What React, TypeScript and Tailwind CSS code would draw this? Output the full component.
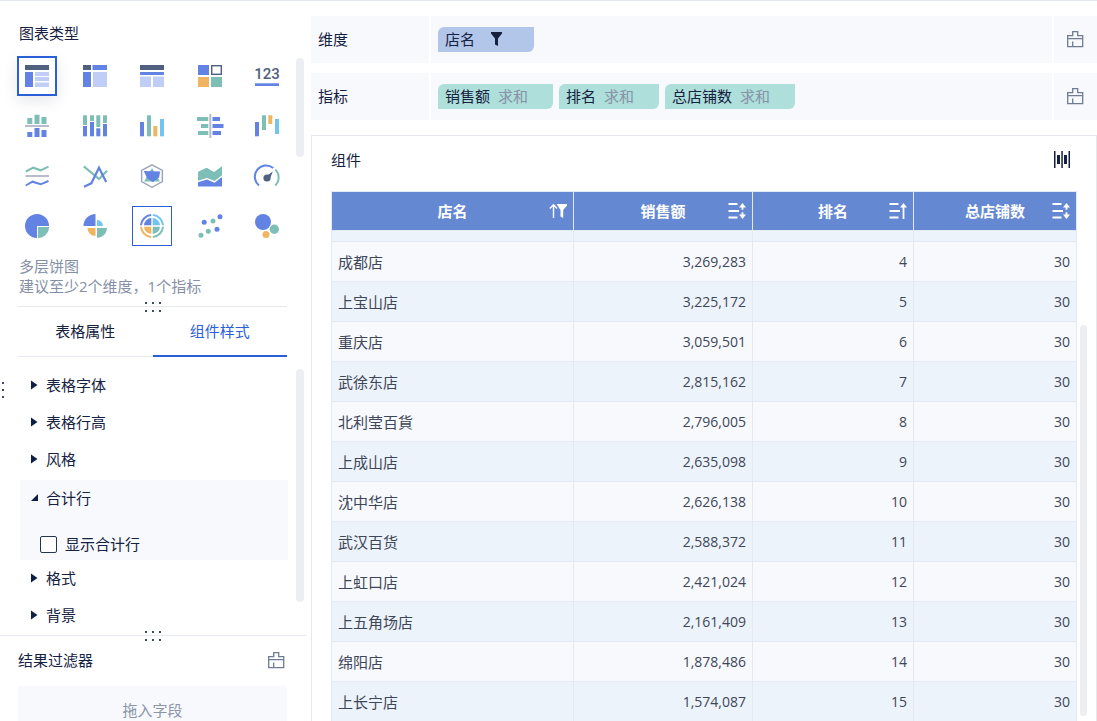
import type { ReactNode } from 'react';
import clsx from 'clsx';

const BLUE = '#6283e3';
const LIGHT = '#c0cdf6';
const DARK = '#4f6080';
const GREEN = '#7dbfb6';
const ORANGE = '#efb560';
const SKY = '#74c4f0';
const GREY = '#b8bccb';

type Bar = [x: number, y: number, w: number, h: number, fill: string];

function Bars({ items }: { items: Bar[] }) {
  return (
    <>
      {items.map(([x, y, width, height, fill], i) => (
        <rect key={i} x={x} y={y} width={width} height={height} fill={fill} />
      ))}
    </>
  );
}

const chartTypes: { name: string; selected?: boolean; hovered?: boolean; icon: ReactNode }[] = [
  {
    name: '分组表',
    selected: true,
    icon: <Bars items={[[0, 1, 24, 5, DARK], [0, 8, 8, 15, BLUE], [10, 8, 14, 4, LIGHT], [10, 13, 14, 4, LIGHT], [10, 18.5, 14, 4.5, LIGHT]]} />,
  },
  {
    name: '交叉表',
    icon: <Bars items={[[0, 1, 8, 5, DARK], [9.5, 1, 14.5, 5, BLUE], [0, 8, 8, 15, BLUE], [10, 8, 14, 15, LIGHT]]} />,
  },
  {
    name: '明细表',
    icon: <Bars items={[[0, 1, 24, 5, DARK], [0, 8, 24, 3, BLUE], [0, 12.5, 11, 10.5, LIGHT], [13, 12.5, 11, 10.5, LIGHT]]} />,
  },
  {
    name: '颜色表格',
    icon: (
      <>
        <Bars items={[[0, 1, 11, 10, BLUE], [0, 13, 11, 10, ORANGE], [13, 13, 11, 10, GREEN]]} />
        <rect x="13.7" y="1.7" width="9.6" height="8.6" fill="none" stroke={DARK} strokeWidth="1.4" />
      </>
    ),
  },
  {
    name: '指标卡',
    icon: (
      <>
        <text x="12" y="15" textAnchor="middle" fontSize="15" fill={DARK} className="font-['Roboto',sans-serif] font-medium">123</text>
        <rect x="0" y="19.3" width="24" height="2.7" fill={BLUE} />
      </>
    ),
  },
  {
    name: '对比柱状图',
    icon: <Bars items={[[2.3, 4, 5, 6, GREEN], [9.5, 0.7, 5, 9.3, GREEN], [16.5, 3, 5, 7, GREEN], [0, 11, 24, 2, GREY], [2.3, 18, 5, 5, BLUE], [9.5, 14, 5, 9, BLUE], [16.5, 16, 5, 7, BLUE]]} />,
  },
  {
    name: '堆积柱状图',
    icon: <Bars items={[[0, 1.3, 4, 9.7, GREEN], [0, 12, 4, 10.3, BLUE], [7, 1.3, 4, 5.7, GREEN], [7, 8, 4, 14.3, BLUE], [13.3, 1.3, 4, 11.7, GREEN], [13.3, 14.3, 4, 8, BLUE], [20, 1.3, 4, 7.7, GREEN], [20, 10, 4, 12.3, BLUE]]} />,
  },
  {
    name: '多系列柱状图',
    icon: <Bars items={[[0, 8, 4, 14.3, BLUE], [7, 1.3, 4, 21, GREEN], [13.3, 12, 4, 10.3, ORANGE], [20, 5, 4, 17.3, SKY]]} />,
  },
  {
    name: '对比条形图',
    icon: <Bars items={[[-1, 3, 11.3, 4, GREEN], [3, 10, 7.3, 4, GREEN], [0, 17, 10.3, 4, GREEN], [11.3, 0, 2, 24, GREY], [14.5, 3, 7.5, 4, BLUE], [14.5, 10, 11, 4, BLUE], [14.5, 17, 8.5, 4, BLUE]]} />,
  },
  {
    name: '瀑布图',
    icon: <Bars items={[[0, 8, 4, 14.3, BLUE], [7, 1.3, 4, 14.7, GREEN], [13.3, 1.3, 4, 8.7, ORANGE], [20, 5, 4, 15, SKY]]} />,
  },
  {
    name: '范围面积图',
    icon: (
      <g fill="none" strokeWidth="2">
        <path d="M.8 7.5 8.3 3.7 15.7 6.3 23.5 2.7" stroke={GREEN} />
        <path d="M.5 12H24" stroke={GREY} />
        <path d="M.8 21.5 7.5 17.7 15.7 20.3 23.5 17" stroke={BLUE} />
      </g>
    ),
  },
  {
    name: '折线图',
    icon: (
      <g fill="none" strokeWidth="2.2">
        <path d="M.8 2.3 16 15 24 6.7" stroke={GREEN} />
        <path d="M1 22.7 8.3 19.3 16 3.7 23.2 18" stroke={BLUE} />
      </g>
    ),
  },
  {
    name: '雷达图',
    icon: (
      <>
        <path d="M12 .8 22.4 6.3V17.7L12 23.3 1.6 17.7V6.3Z" fill="none" stroke="#9aa3b8" strokeWidth="1.4" />
        <path d="M12 4 20 17.5H4Z" fill={GREEN} />
        <path d="M3.8 7 20.2 7.5 19 13.5 12.7 18.3 7 14Z" fill={BLUE} />
      </>
    ),
  },
  {
    name: '面积图',
    icon: (
      <>
        <path d="M0 7.7 8.7 3.7 16 8 24 2.3V11.3L16.5 17 9 14 0 16.7Z" fill={GREEN} />
        <path d="M0 18.2 9 15.5 16.5 18.7 24 13V22.5H0Z" fill={BLUE} />
      </>
    ),
  },
  {
    name: '仪表盘',
    icon: (
      <>
        <g fill="none" strokeWidth="2">
          <path d="M4 21.5A11 11 0 0 1 18.2 4" stroke={BLUE} />
          <path d="M20.2 5.5A11 11 0 0 1 20.2 21.5" stroke={GREEN} />
        </g>
        <circle cx="12" cy="14" r="3.6" fill={DARK} />
        <path d="M11.5 12 17.8 7.5 14.8 15Z" fill={DARK} />
      </>
    ),
  },
  {
    name: '饼图',
    icon: (
      <>
        <path d="M12 12V24A12 12 0 1 1 24 12Z" fill={BLUE} />
        <path d="M13 13H24A11 11 0 0 1 13 24Z" fill={GREEN} />
      </>
    ),
  },
  {
    name: '玫瑰图',
    icon: (
      <>
        <path d="M12.5 12V0A12 12 0 0 0 .5 12Z" fill={BLUE} />
        <path d="M14 12V6A6 6 0 0 1 20 12Z" fill={SKY} />
        <path d="M12.5 14V22A8 8 0 0 1 4.5 14Z" fill={ORANGE} />
        <path d="M14 14H24A10 10 0 0 1 14 24Z" fill={GREEN} />
      </>
    ),
  },
  {
    name: '多层饼图',
    hovered: true,
    icon: (
      <>
        <g fill="none" strokeWidth="2">
          <path d="M1 11.2A11 11 0 0 1 11.2 1" stroke={BLUE} />
          <path d="M12.8 1A11 11 0 0 1 23 11.2" stroke={SKY} />
          <path d="M1 12.8A11 11 0 0 0 11.2 23" stroke={ORANGE} />
          <path d="M12.8 23A11 11 0 0 0 23 12.8" stroke={GREEN} />
        </g>
        <path d="M11.3 11.3V4A7.6 7.6 0 0 0 4 11.3Z" fill={BLUE} />
        <path d="M12.7 11.3V4A7.6 7.6 0 0 1 20 11.3Z" fill={SKY} />
        <path d="M11.3 12.7V20A7.6 7.6 0 0 1 4 12.7Z" fill={ORANGE} />
        <path d="M12.7 12.7V20A7.6 7.6 0 0 0 20 12.7Z" fill={GREEN} />
      </>
    ),
  },
  {
    name: '散点图',
    icon: (
      <>
        <g fill={BLUE}>
          <circle cx="6.2" cy="8.3" r="2.5" />
          <circle cx="22" cy="2.7" r="2.5" />
          <circle cx="19" cy="15.3" r="2.5" />
        </g>
        <g fill={GREEN}>
          <circle cx="15" cy="7" r="2.5" />
          <circle cx="3" cy="21.3" r="2.5" />
          <circle cx="10.3" cy="17.3" r="2.5" />
        </g>
      </>
    ),
  },
  {
    name: '聚合气泡图',
    icon: (
      <>
        <circle cx="8" cy="8" r="8" fill={BLUE} />
        <circle cx="19.3" cy="15.3" r="4.7" fill={GREEN} />
        <circle cx="11" cy="20.6" r="3.5" fill={ORANGE} />
      </>
    ),
  },
];

const stores = [
  ['成都店', '3,269,283', 4],
  ['上宝山店', '3,225,172', 5],
  ['重庆店', '3,059,501', 6],
  ['武徐东店', '2,815,162', 7],
  ['北利莹百貨', '2,796,005', 8],
  ['上成山店', '2,635,098', 9],
  ['沈中华店', '2,626,138', 10],
  ['武汉百货', '2,588,372', 11],
  ['上虹口店', '2,421,024', 12],
  ['上五角场店', '2,161,409', 13],
  ['绵阳店', '1,878,486', 14],
  ['上长宁店', '1,574,087', 15],
];

function BrushIcon() {
  return (
    <svg width="17" height="17" viewBox="0 0 17 17" fill="none" stroke="#6f7c93" strokeWidth="1.3">
      <path d="M.7 15.7V4.7H5.7V.7H10.7V4.7H15.7V15.7Z" />
      <path d="M.7 7.7H15.7M5.7 10.5V15" />
    </svg>
  );
}

function FilterIcon() {
  return (
    <svg width="11" height="14" viewBox="0 0 11 14" fill="currentColor">
      <path d="M0 0H11V1.5L7 6.5V14L4 12.5V6.5L0 1.5Z" />
    </svg>
  );
}

function SortIcon({ up }: { up?: boolean }) {
  return (
    <svg width="18" height="18" viewBox="0 0 18 18" fill="none" stroke="currentColor" strokeWidth="1.8">
      <path d="M.5 2H9.5M.5 9H11M.5 15.5H9.5" />
      {up ? (
        <>
          <path d="M14.5 17V3" />
          <path d="M11 5.5 14.5 1 18 5.5Z" fill="currentColor" stroke="none" />
        </>
      ) : (
        <>
          <path d="M14.5 4V7.7M14.5 10.3V14" />
          <path d="M11 5.5 14.5 1 18 5.5ZM11 12.5 14.5 17 18 12.5Z" fill="currentColor" stroke="none" />
        </>
      )}
    </svg>
  );
}

function SortFilterIcon() {
  return (
    <svg width="18" height="16" viewBox="0 0 18 16" fill="none" stroke="currentColor" strokeWidth="1.4">
      <path d="M4.5 15V2M.8 5.5 4.5 1.8 8 5.5" />
      <path d="M7.5 1H18V2.5L14.2 7V15L11.5 13.5V7Z" fill="currentColor" stroke="none" />
    </svg>
  );
}

function Divider({ className }: { className?: string }) {
  return (
    <div className={clsx('relative h-px shrink-0 bg-[#e6e8f0]', className)}>
      <svg className="absolute -top-[5px] left-1/2 -translate-x-1/2" width="18" height="12" viewBox="0 0 18 12" fill="#3c4a66">
        {[1, 8, 15].map((x) => (
          <g key={x}>
            <rect x={x} y="1" width="2" height="2" />
            <rect x={x} y="9" width="2" height="2" />
          </g>
        ))}
      </svg>
    </div>
  );
}

function PropertyItem({ label, open }: { label: string; open?: boolean }) {
  return (
    <button type="button" aria-expanded={!!open} className="flex h-[37px] w-full items-center pb-0.5 pl-[11px] text-left">
      <svg width="8" height="10" viewBox="0 0 8 10" fill="#0f1f42">
        {open ? <path d="M7 1V8H0Z" /> : <path d="M0 .5 6.5 5 0 9.5Z" />}
      </svg>
      <span className="ml-[7px]">{label}</span>
    </button>
  );
}

function FieldTag({ name, agg }: { name: string; agg?: string }) {
  return (
    <button
      type="button"
      className={clsx(
        'flex h-[25px] items-center rounded-tl-md rounded-br-md pb-0.5 pl-[7px]',
        agg ? 'gap-2 bg-[#aedfda] pr-[25px]' : 'gap-4 bg-[#b1c6e9] pr-8',
      )}
    >
      <span>{name}</span>
      {agg ? <span className="text-[#8691a6]">{agg}</span> : <FilterIcon />}
    </button>
  );
}

function FieldRow({ label, children }: { label: string; children: ReactNode }) {
  return (
    <div className="flex h-[47px] shrink-0 gap-0.5">
      <div className="flex w-[118px] items-center bg-[#f8f9fd] pb-0.5 pl-[7px]">{label}</div>
      <div className="flex flex-1 items-center gap-1.5 bg-[#f8f9fd] pl-[7px]">{children}</div>
      <button type="button" aria-label="清空" className="flex w-[43px] items-center justify-center bg-[#f8f9fd]">
        <BrushIcon />
      </button>
    </div>
  );
}

function HeaderCell({ title, icon }: { title: string; icon: ReactNode }) {
  return (
    <th className="h-[39px] border-r border-b border-[#e3eaf6] bg-[#6488d1] px-1.5 font-bold text-white">
      <div className="grid grid-cols-[1fr_auto_1fr] items-center">
        <span className="col-start-2">{title}</span>
        <span className="flex justify-end">{icon}</span>
      </div>
    </th>
  );
}

export default function App() {
  return (
    <div className="flex h-screen overflow-hidden border-t border-[#e3e7f1] bg-white font-['Open_Sans','Noto_Sans_CJK_SC',sans-serif] text-[15px] leading-5 text-[#14213f]">
      <aside className="relative flex w-[306px] shrink-0 flex-col">
        <h2 className="mt-[22px] ml-[19px]">图表类型</h2>
        <div className="mt-[13px] flex pl-[17px]">
          <div className="w-[270px]">
            <div className="grid grid-cols-[repeat(5,40px)] justify-between gap-y-2.5">
              {chartTypes.map((type) => (
                <button
                  key={type.name}
                  type="button"
                  aria-label={type.name}
                  className={clsx(
                    'flex h-10 items-center justify-center',
                    type.selected && 'border-2 border-[#2b5fd9] shadow-[0_5px_15px_rgba(20,30,60,0.1)]',
                    type.hovered && 'border border-[#2b5fd9]',
                  )}
                >
                  <svg width="24" height="24" viewBox="0 0 24 24" className="shrink-0 overflow-visible">
                    {type.icon}
                  </svg>
                </button>
              ))}
            </div>
            <p className="my-2.5 ml-0.5 text-[#8590a5]">
              多层饼图
              <br />
              建议至少2个维度，1个指标
            </p>
          </div>
          <div className="mt-0.5 ml-[9px] h-[99px] w-2 rounded-full bg-[#edeef3]" />
        </div>

        <div className="pr-[19px] pl-[18px]">
          <Divider />
          <div role="tablist" className="flex h-[50px]">
            <button type="button" role="tab" aria-selected={false} className="flex-1 border-b border-[#e6e8f0] pb-px">
              表格属性
            </button>
            <button type="button" role="tab" aria-selected className="flex-1 border-b-2 border-[#2b5fd9] text-[#2b5fd9]">
              组件样式
            </button>
          </div>
        </div>

        <div className="flex min-h-0 flex-1 pt-2.5">
          <div className="ml-5 w-[268px]">
            <PropertyItem label="表格字体" />
            <PropertyItem label="表格行高" />
            <PropertyItem label="风格" />
            <div className="mt-0.5 h-20 bg-[#f8f9fd]">
              <PropertyItem label="合计行" open />
              <label className="mt-[17px] ml-5 flex items-center gap-2">
                <input type="checkbox" className="size-[17px] appearance-none rounded-xs border border-[#26344f] bg-white" />
                显示合计行
              </label>
            </div>
            <PropertyItem label="格式" />
            <PropertyItem label="背景" />
          </div>
          <div className="mt-0.5 ml-2 h-[233px] w-2 rounded-full bg-[#edeef3]" />
        </div>

        <Divider />
        <section className="h-[85px] shrink-0 overflow-hidden pr-[19px] pl-[18px]">
          <div className="flex h-[50px] items-center justify-between pr-0.5 pb-0.5">
            <h2>结果过滤器</h2>
            <button type="button" aria-label="清空过滤器">
              <BrushIcon />
            </button>
          </div>
          <div className="flex h-12 items-center justify-center bg-[#f8f9fd] text-[#8b95aa]">拖入字段</div>
        </section>

        <svg className="absolute top-[381px] left-0.5" width="2" height="17" viewBox="0 0 2 17" fill="#3c4a66">
          <rect y="0" width="2" height="2" />
          <rect y="7" width="2" height="2" />
          <rect y="14" width="2" height="2" />
        </svg>
      </aside>

      <main className="ml-[5px] flex min-w-0 flex-1 flex-col pt-[15px]">
        <div className="flex flex-col gap-2.5">
          <FieldRow label="维度">
            <FieldTag name="店名" />
          </FieldRow>
          <FieldRow label="指标">
            <FieldTag name="销售额" agg="求和" />
            <FieldTag name="排名" agg="求和" />
            <FieldTag name="总店铺数" agg="求和" />
          </FieldRow>
        </div>

        <section className="mt-[15px] flex min-h-0 flex-1 flex-col border border-b-0 border-[#e6e8f0] pr-[9px] pl-[19px]">
          <div className="flex h-[55px] shrink-0 items-center justify-between pr-4 pb-2">
            <h2>组件</h2>
            <button type="button" aria-label="调整列宽">
              <svg width="18" height="17" viewBox="0 0 18 17" fill="#14213f">
                <rect x="1" width="1.5" height="17" />
                <rect x="4" y="4" width="3" height="9" />
                <rect x="8.3" width="1.5" height="17" />
                <rect x="11" y="4" width="3" height="9" />
                <rect x="15.5" width="1.5" height="17" />
              </svg>
            </button>
          </div>
          <div className="flex min-h-0 flex-1 overflow-hidden">
            <div className="flex-1">
              <table className="w-full table-fixed border-separate border-spacing-0 border-t border-l border-[#e3eaf6]">
                <colgroup>
                  <col className="w-[242px]" />
                  <col className="w-[179px]" />
                  <col className="w-[161px]" />
                  <col className="w-[163px]" />
                </colgroup>
                <thead>
                  <tr>
                    <HeaderCell title="店名" icon={<SortFilterIcon />} />
                    <HeaderCell title="销售额" icon={<SortIcon />} />
                    <HeaderCell title="排名" icon={<SortIcon up />} />
                    <HeaderCell title="总店铺数" icon={<SortIcon />} />
                  </tr>
                </thead>
                <tbody className="text-[#3d4759] [&_td]:border-r [&_td]:border-b [&_td]:border-[#e3eaf6] [&_td]:px-1.5">
                  {/* tail of the row scrolled under the header */}
                  <tr className="h-[11px] bg-[#edf3fa]">
                    <td />
                    <td />
                    <td />
                    <td />
                  </tr>
                  {stores.map(([name, sales, rank]) => (
                    <tr key={name} className="h-10 bg-[#f8f9fd] odd:bg-[#edf3fa]">
                      <td>{name}</td>
                      <td className="text-right text-sm">{sales}</td>
                      <td className="text-right text-sm">{rank}</td>
                      <td className="text-right text-sm">30</td>
                    </tr>
                  ))}
                </tbody>
              </table>
            </div>
            <div className="mt-[134px] mb-[5px] ml-[3px] w-[7px] rounded-full bg-[#edeef1]" />
          </div>
        </section>
      </main>
    </div>
  );
}
